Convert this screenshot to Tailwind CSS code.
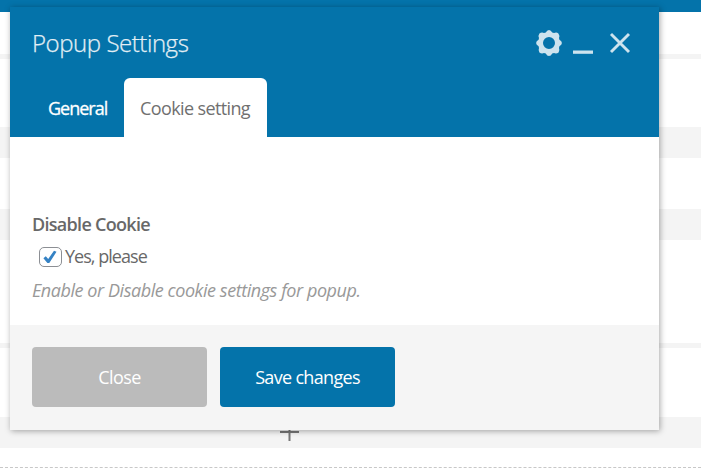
<!DOCTYPE html>
<html lang="en">
<head>
<meta charset="utf-8">
<title>Popup Settings</title>
<script src="https://cdn.jsdelivr.net/npm/@tailwindcss/browser@4"></script>
</head>
<body class="relative h-[473px] w-[701px] overflow-hidden bg-white font-['Open_Sans','Noto_Sans',sans-serif]">
  <!-- Page behind the dialog -->
  <div class="flex h-[473px] flex-col" aria-hidden="true">
    <div class="h-3 shrink-0 bg-[#0473aa]"></div>
    <div class="mt-[42px] h-[5px] shrink-0 bg-[#f4f4f4]"></div>
    <div class="mt-[68px] h-[31px] shrink-0 bg-[#f4f4f4]"></div>
    <div class="mt-[51px] h-[31px] shrink-0 bg-[#f4f4f4]"></div>
    <div class="mt-[103px] h-[5px] shrink-0 bg-[#f4f4f4]"></div>
    <div class="mt-[69px] flex h-[31px] shrink-0 bg-[#f4f4f4] pl-[280px]">
      <svg class="h-6 w-[19px]" viewBox="0 0 19 24" fill="none" stroke="#777" stroke-width="2"><path d="M0 15H19M9.5 6V24"/></svg>
    </div>
    <div class="mt-[19px] shrink-0 border-t border-dashed border-[#c8c8c8]"></div>
  </div>

  <!-- Dialog -->
  <section class="absolute left-[10px] top-[7px] flex h-[423px] w-[649px] flex-col bg-white shadow-[1px_1px_6px_rgba(0,0,0,0.35)]">
    <header class="flex h-[130px] shrink-0 flex-col justify-between bg-[#0473aa]">
      <div class="flex h-[71px] items-center justify-between pl-[22px] pr-[28px]">
        <h1 class="whitespace-nowrap text-[24px] font-light leading-[30px] tracking-[-0.45px] text-[#e3eff5] [-webkit-text-stroke:0.25px]">Popup Settings</h1>
        <div class="flex items-center text-[#cde3ee]">
          <svg class="h-[26px] w-[26px]" viewBox="-13 -13 26 26"><path fill="currentColor" fill-rule="evenodd" d="M-3.2-10.4Q-2-12.9 0-12.9T3.2-10.4L5-10Q7.5-11.2 9.4-9.6Q11-7.5 10-5L10.4-3.2Q12.9-2 12.9 0T10.4 3.2L10 5Q11 7.5 9.6 9.4Q7.5 11 5 10L3.2 10.4Q2 12.9 0 12.9T-3.2 10.4L-5 10Q-7.5 11-9.6 9.4Q-11 7.5-10 5L-10.4 3.2Q-12.9 2-12.9 0T-10.4-3.2L-10-5Q-11-7.5-9.6-9.4Q-7.5-11-5-10ZM0-6A6 6 0 1 0 0 6A6 6 0 1 0 0-6Z"/></svg>
          <svg class="ml-[11px] h-[26px] w-5" viewBox="0 0 20 26"><path fill="currentColor" d="M0 20.5H20V23.8H0Z"/></svg>
          <svg class="ml-[16px] h-[26px] w-[22px]" viewBox="0 0 22 26" fill="none" stroke="currentColor" stroke-width="2.9"><path d="M2 4L20 22M20 4L2 22"/></svg>
        </div>
      </div>
      <nav class="flex h-[59px] pl-[22px] text-[18px] leading-6">
        <span class="flex w-[92px] items-center whitespace-nowrap pl-4 tracking-[-1px] text-white [-webkit-text-stroke:0.3px]">General</span>
        <span class="flex w-[143px] items-center whitespace-nowrap rounded-t-[6px] bg-white pl-4 tracking-[-0.62px] text-[#707070]">Cookie setting</span>
      </nav>
    </header>

    <main class="flex flex-1 flex-col pl-[22px] pt-[74px] text-[18px] text-[#686868]">
      <h2 class="h-[26px] whitespace-nowrap font-semibold leading-[26px] tracking-[-0.7px]">Disable Cookie</h2>
      <label class="mt-[7px] flex h-[26px] items-center pl-[7px]">
        <span class="flex h-5 w-[23px] items-center justify-center rounded-[5px] border border-[#8c8f94] bg-white pr-[2px]">
          <svg class="h-[14px] w-[14px]" viewBox="0 0 14 14"><path fill="#3582c4" d="M.4 8.2L2.8 6.3L5.2 8.9L11 .8L13.5 1.8L6.3 13H4.4Z"/></svg>
        </span>
        <span class="ml-[3px] whitespace-nowrap pb-[2px] leading-[24px] tracking-[-0.97px]">Yes, please</span>
      </label>
      <p class="mt-[7px] whitespace-nowrap italic leading-[26px] tracking-[-0.44px] text-[#999]">Enable or Disable cookie settings for popup.</p>
    </main>

    <footer class="flex h-[105px] shrink-0 gap-[13px] bg-[#f5f5f5] pl-[22px] pt-[22px] text-[18px] leading-6">
      <button class="h-[60px] w-[175px] whitespace-nowrap rounded-[4px] bg-[#bbb] pb-px tracking-[-0.6px] text-white">Close</button>
      <button class="h-[60px] w-[175px] whitespace-nowrap rounded-[4px] bg-[#0473aa] pb-px tracking-[-0.68px] text-white">Save changes</button>
    </footer>
  </section>
</body>
</html>
